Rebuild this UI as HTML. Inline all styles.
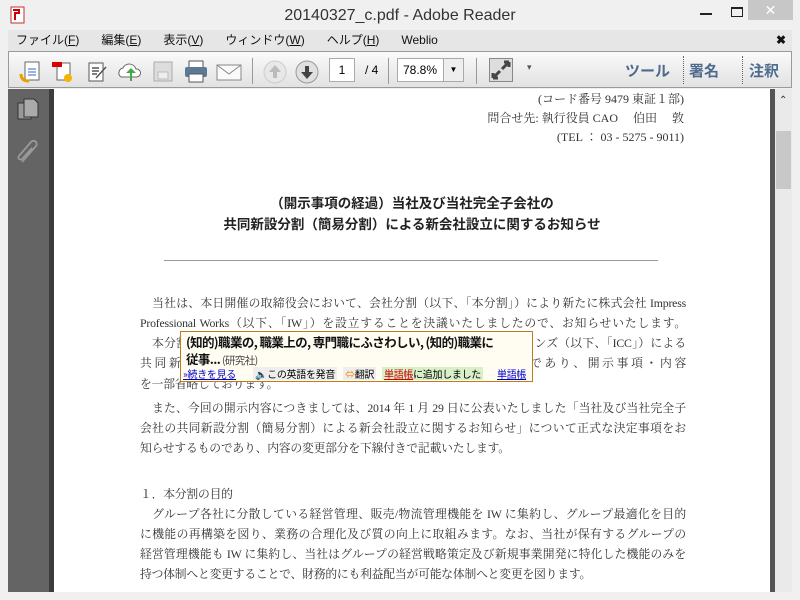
<!DOCTYPE html>
<html><head><meta charset="utf-8"><style>
*{margin:0;padding:0;box-sizing:border-box}
body{width:800px;height:600px;overflow:hidden;background:#f0f0f0;position:relative;font-family:"Liberation Sans","Noto Sans CJK JP",sans-serif}
.a{position:absolute}
.title{left:0;top:0;width:800px;height:30px;background:#f0f0f0;text-align:center;font-size:16px;color:#333;line-height:32px}
.menu{left:8px;top:30px;width:784px;height:21px;background:#e6e6e6;font-size:12px;color:#111;line-height:21px}
.menu span{margin-left:8px;margin-right:14px}
.tb{left:8px;top:51px;width:784px;height:37px;background:linear-gradient(#fafafa,#e2e2e2);border:1px solid #9a9a9a}
.side{left:8px;top:89px;width:41px;height:503px;background:#646464}
.sep{left:49px;top:89px;width:5px;height:503px;background:#3c3c3c}
.page{left:54px;top:89px;width:716px;height:503px;background:#fff;overflow:hidden}
.rs{left:770px;top:89px;width:5px;height:503px;background:#555}
.sb{left:775px;top:89px;width:17px;height:503px;background:#eaeaea}
.serif{font-family:"Liberation Serif","Noto Serif CJK JP",serif;color:#333}
.ln{position:absolute;left:86px;width:546px;font-size:11.8px;letter-spacing:-0.2px;text-align:justify;text-align-last:justify;line-height:16px;height:16px;overflow:hidden}
.ico{position:absolute;top:8px}
</style></head><body>
<div class="a title">20140327_c.pdf - Adobe Reader</div>
<svg class="a" style="left:9px;top:6px" width="18" height="18"><rect x="2" y="1" width="13" height="16" fill="#fff" stroke="#b33"/><path d="M4 4h6v3H6v7" stroke="#c00" stroke-width="2" fill="none"/></svg>
<div class="a" style="left:700px;width:12px;height:2px;background:#222;top:13px"></div>
<div class="a" style="left:731px;top:7px;width:12px;height:10px;border:1px solid #222;border-top-width:2px"></div>
<div class="a" style="left:748px;top:0;width:45px;height:20px;background:#c7c7c7;color:#fff;text-align:center;font-size:14px;line-height:20px">✕</div>
<div class="a menu"><span>ファイル(<u>F</u>)</span><span>編集(<u>E</u>)</span><span>表示(<u>V</u>)</span><span>ウィンドウ(<u>W</u>)</span><span>ヘルプ(<u>H</u>)</span><span>Weblio</span><b style="position:absolute;right:6px;font-size:12px">✖</b></div>
<div class="a tb">
 <svg class="ico" style="left:10px" width="24" height="24"><rect x="6" y="2" width="14" height="18" fill="#fff" stroke="#666"/><path d="M9 9h8M9 12h8M9 15h8" stroke="#36c"/><path d="M2 14q0 7 8 7" stroke="#e8a000" stroke-width="3" fill="none"/></svg>
 <svg class="ico" style="left:42px" width="24" height="24"><rect x="6" y="3" width="13" height="17" fill="#fff" stroke="#666"/><rect x="1" y="2" width="10" height="5" fill="#d00"/><circle cx="17" cy="18" r="4" fill="#f4b400"/></svg>
 <svg class="ico" style="left:77px" width="24" height="24"><rect x="3" y="3" width="14" height="18" fill="#fff" stroke="#555"/><path d="M6 8h7M6 11h7M6 14h5M10 18l10-11" stroke="#555" stroke-width="1.5"/></svg>
 <svg class="ico" style="left:108px" width="26" height="24"><path d="M4 17a5 5 0 0 1 2-9a7 7 0 0 1 13 1a4 4 0 0 1 1 8z" fill="#fff" stroke="#666"/><path d="M13 21v-8h-4l5-5 5 5h-4v8z" fill="#4a4" /></svg>
 <svg class="ico" style="left:143px" width="22" height="24"><rect x="2" y="2" width="18" height="19" fill="#ddd" stroke="#aaa"/><rect x="6" y="12" width="10" height="7" fill="#eee" stroke="#bbb"/></svg>
 <svg class="ico" style="left:175px" width="24" height="24"><rect x="5" y="1" width="14" height="7" fill="#fff" stroke="#555"/><rect x="1" y="7" width="22" height="10" rx="2" fill="#5c7a96"/><rect x="5" y="14" width="14" height="8" fill="#fff" stroke="#555"/></svg>
 <svg class="ico" style="left:207px" width="26" height="24"><rect x="1" y="5" width="24" height="15" fill="#fafafa" stroke="#888"/><path d="M1 5l12 9 12-9" stroke="#888" fill="none"/></svg>
 <div class="a" style="left:243px;top:6px;width:1px;height:26px;background:#999"></div>
 <svg class="ico" style="left:254px" width="24" height="24"><circle cx="12" cy="12" r="11" fill="#e8e8e8" stroke="#ccc"/><path d="M12 5l6 7h-4v6h-4v-6H6z" fill="#bbb"/></svg>
 <svg class="ico" style="left:286px" width="24" height="24"><circle cx="12" cy="12" r="11" fill="#e0e0e0" stroke="#999"/><path d="M12 19l6-7h-4V6h-4v6H6z" fill="#444"/></svg>
 <div class="a" style="left:320px;top:6px;width:26px;height:24px;background:#fff;border:1px solid #aaa;font-size:12px;text-align:center;line-height:22px">1</div>
 <div class="a" style="left:356px;top:6px;font-size:12px;line-height:24px">/ 4</div>
 <div class="a" style="left:379px;top:6px;width:1px;height:26px;background:#999"></div>
 <div class="a" style="left:388px;top:6px;width:67px;height:24px;background:#fff;border:1px solid #aaa;font-size:12px;line-height:22px;padding-left:5px">78.8%<span style="position:absolute;right:0;top:0;width:20px;height:22px;border-left:1px solid #aaa;background:#eee;text-align:center;font-size:8px">▼</span></div>
 <div class="a" style="left:467px;top:6px;width:1px;height:26px;background:#999"></div>
 <svg class="ico" style="left:480px;top:6px" width="24" height="24"><rect x="0.5" y="0.5" width="23" height="23" fill="#ddd" stroke="#888"/><path d="M4 20l7-7M20 4l-7 7M4 20h5M4 20v-5M20 4h-5M20 4v5" stroke="#444" stroke-width="3"/></svg>
 <div class="a" style="left:518px;top:10px;font-size:9px;color:#555">▾</div>
 <div class="a" style="left:616px;top:8px;font-size:15px;font-weight:bold;color:#4d6b8c">ツール</div>
 <div class="a" style="left:674px;top:4px;width:0;height:28px;border-left:1px dotted #666"></div>
 <div class="a" style="left:680px;top:8px;font-size:15px;font-weight:bold;color:#4d6b8c">署名</div>
 <div class="a" style="left:733px;top:4px;width:0;height:28px;border-left:1px dotted #666"></div>
 <div class="a" style="left:740px;top:8px;font-size:15px;font-weight:bold;color:#4d6b8c">注釈</div>
</div>
<div class="a side"></div>
<svg class="a" style="left:16px;top:97px" width="24" height="24"><rect x="2" y="6" width="13" height="16" fill="#999" stroke="#333"/><path d="M8 2h10l4 4v14H8z" fill="#aaa" stroke="#333"/></svg>
<svg class="a" style="left:16px;top:140px" width="24" height="26"><path d="M6 22L20 6a3 3 0 0 0-5-4L3 16a2 2 0 0 0 3 3l10-11" stroke="#999" stroke-width="1.8" fill="none"/></svg>
<div class="a sep"></div>
<div class="a page serif">
 <div class="a" style="right:86px;top:1px;font-size:12px">(コード番号 9479 東証１部)</div>
 <div class="a" style="right:86px;top:20px;font-size:12px">問合せ先:  執行役員 CAO　 伯田　 敦</div>
 <div class="a" style="right:86px;top:39px;font-size:12px">(TEL ： 03 - 5275 - 9011)</div>
 <div class="a" style="left:0;width:716px;top:103px;text-align:center;font-size:13.5px;font-weight:bold;line-height:21px;color:#222;font-family:'Noto Sans CJK JP',sans-serif">（開示事項の経過）当社及び当社完全子会社の<br>共同新設分割（簡易分割）による新会社設立に関するお知らせ</div>
 <div class="a" style="left:110px;top:171px;width:494px;height:1px;background:#999"></div>
 <div class="ln" style="top:206px">　当社は、本日開催の取締役会において、会社分割（以下、「本分割」）により新たに株式会社 Impress</div>
 <div class="ln" style="top:226px">Professional Works（以下、「IW」）を設立することを決議いたしましたので、お知らせいたします。</div>
 <div class="ln" style="top:246px">　本分割は、当社、インプレスジャパン及びインプレスコミュニケーションズ（以下、「ICC」）による</div>
 <div class="ln" style="top:266px">共同新設分割であり、新設会社に承継させる簡易な新設分割であり、開示事項・内容</div>
 <div class="ln" style="top:287px;text-align-last:left">を一部省略しております。</div>
 <div class="ln" style="top:311px">　また、今回の開示内容につきましては、2014 年 1 月 29 日に公表いたしました「当社及び当社完全子</div>
 <div class="ln" style="top:331px">会社の共同新設分割（簡易分割）による新会社設立に関するお知らせ」について正式な決定事項をお</div>
 <div class="ln" style="top:351px;text-align-last:left">知らせするものであり、内容の変更部分を下線付きで記載いたします。</div>
 <div class="ln" style="top:397px;text-align-last:left">１．本分割の目的</div>
 <div class="ln" style="top:417px">　グループ各社に分散している経営管理、販売/物流管理機能を IW に集約し、グループ最適化を目的</div>
 <div class="ln" style="top:437px">に機能の再構築を図り、業務の合理化及び質の向上に取組みます。なお、当社が保有するグループの</div>
 <div class="ln" style="top:457px">経営管理機能も IW に集約し、当社はグループの経営戦略策定及び新規事業開発に特化した機能のみを</div>
 <div class="ln" style="top:477px;text-align-last:left">持つ体制へと変更することで、財務的にも利益配当が可能な体制へと変更を図ります。</div>
</div>
<div class="a" style="left:180px;top:331px;width:353px;height:51px;background:#fffdf2;border:1px solid #c07a20;font-family:'Noto Sans CJK JP',sans-serif">
 <div style="position:absolute;left:5px;top:1px;font-size:12.5px;letter-spacing:-0.6px;font-weight:bold;line-height:17px;color:#111;white-space:nowrap">(知的)職業の, 職業上の, 専門職にふさわしい, (知的)職業に<br>従事...<span style="font-weight:normal;font-size:10.5px;color:#444"> (研究社)</span></div>
 <div style="position:absolute;left:2px;top:35px;font-size:10px;line-height:13px;white-space:nowrap;width:350px;letter-spacing:-0.3px">
  <span style="color:#00c;text-decoration:underline">»続きを見る</span>
  <span style="position:absolute;left:70px;background:#eee;padding:0 2px">🔈この英語を発音</span>
  <span style="position:absolute;left:160px;background:#eee;padding:0 2px"><span style="color:#f80">⇔</span>翻訳</span>
  <span style="position:absolute;left:199px;background:#d8efc8;padding:0 2px"><span style="color:#c00;text-decoration:underline">単語帳</span>に追加しました</span>
  <span style="position:absolute;left:314px;color:#00c;text-decoration:underline">単語帳</span>
 </div>
</div>
<div class="a rs"></div>
<div class="a sb"><div class="a" style="left:4px;top:6px;font-size:10px;color:#333">⌃</div><div class="a" style="left:1px;top:42px;width:15px;height:58px;background:#c8c8c8"></div></div>
</body></html>
